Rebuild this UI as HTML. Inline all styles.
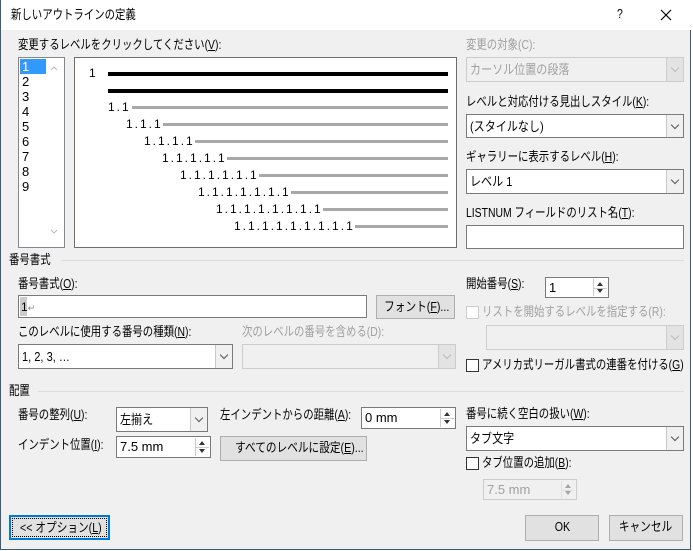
<!DOCTYPE html>
<html><head><meta charset="utf-8"><style>
*{box-sizing:border-box;margin:0;padding:0}
body{width:693px;height:551px;background:#fff;position:relative;overflow:hidden;font-family:"Liberation Sans","Noto Sans CJK JP",sans-serif;font-size:12px;color:#000}
#win{position:absolute;left:0;top:0;width:691px;height:550px;background:#f0f0f0;border:1px solid #3c5a7a;border-top:none}
#tb{position:absolute;left:0;top:0;width:690px;height:30px;background:#fff}
.a{position:absolute;white-space:nowrap;line-height:14px;transform:scaleX(.8);transform-origin:0 0}
.g{color:#a0a0a0}
.box{position:absolute;background:#fff;border:1px solid #7a7a7a}
.cb{position:absolute;background:#fff;border:1px solid #7a7a7a}
.cb .ar{position:absolute;right:0;top:0;bottom:0;width:17px;background:#f0f0f0;border-left:1px solid #c8c8c8}
.cb .ar:after{content:"";position:absolute;left:5px;top:7px;width:5px;height:5px;border-right:1px solid #555;border-bottom:1px solid #555;transform:rotate(45deg)}
.cb.dis{background:#f0f0f0;border-color:#cccccc}
.cb.dis .ar{background:#e3e3e3;border-left-color:#cccccc}
.cb.dis .ar:after{border-color:#bbb}
.cb .t{position:absolute;left:3px;top:5px;line-height:14px;white-space:nowrap;transform:scaleX(.85);transform-origin:0 0;font-size:13px}
.btn{position:absolute;background:#e1e1e1;border:1px solid #adadad;text-align:center;line-height:22px;white-space:nowrap}
.btn span{display:inline-block;transform:scaleX(.82)}
.spin{position:absolute;background:#fff;border:1px solid #7a7a7a}
.spin .s{position:absolute;right:1px;top:1px;bottom:1px;width:14px;border-left:1px solid #ccc}
.spin .s:before{content:"";position:absolute;left:3px;top:3px;border:3.5px solid transparent;border-bottom:4px solid #333;border-top:none}
.spin .s:after{content:"";position:absolute;left:3px;bottom:3px;border:3.5px solid transparent;border-top:4px solid #333;border-bottom:none}
.spin .s i{position:absolute;left:0;right:0;top:50%;border-top:1px solid #ccc}
.spin .t{position:absolute;left:3px;top:3px;font-size:13px;line-height:14px;white-space:nowrap}
.chk{position:absolute;width:13px;height:13px;border:1px solid #333;background:#fff}
.sep{position:absolute;height:1px;background:#dcdcdc}
.bl{position:absolute;height:4px;background:#000}
.gl{position:absolute;height:3px;background:#a8a8a8}
.n{position:absolute;font-size:12px;letter-spacing:2px;line-height:12px;white-space:nowrap}
u{text-decoration:underline}
</style></head><body>
<div id="win">
<div id="tb"></div>
<div class="a" style="left:10px;top:8px;font-size:13px">新しいアウトラインの定義</div>
<div class="a" style="left:616px;top:7px;font-size:13px">?</div>
<svg style="position:absolute;left:659px;top:9px" width="12" height="12"><path d="M1 1L11 11M11 1L1 11" stroke="#000" stroke-width="1.2"/></svg>

<div class="a" style="left:17px;top:38px;font-size:13px">変更するレベルをクリックしてください(<u>V</u>):</div>
<div class="box" style="left:17px;top:57px;width:47px;height:191px;border-color:#828790"></div>
<div style="position:absolute;left:19px;top:59px;width:26px;height:15px;background:#3399ff"></div>
<div style="position:absolute;left:21px;top:60px;color:#fff;font-size:13px;line-height:14px">1</div>
<div style="position:absolute;left:21px;top:74px;font-size:13px;line-height:15px">2<br>3<br>4<br>5<br>6<br>7<br>8<br>9</div>
<svg style="position:absolute;left:49px;top:65px" width="8" height="6"><path d="M1 5L4 2L7 5" fill="none" stroke="#bbb"/></svg>
<svg style="position:absolute;left:49px;top:229px" width="8" height="6"><path d="M1 1L4 4L7 1" fill="none" stroke="#bbb"/></svg>

<div class="box" style="left:73px;top:57px;width:383px;height:191px;border-color:#6d6d6d"></div>
<div class="n" style="left:88px;top:67px">1</div>
<div class="bl" style="left:107px;top:72px;width:340px"></div>
<div class="bl" style="left:107px;top:89px;width:340px"></div>
<div class="n" style="left:107px;top:101px">1.1</div><div class="gl" style="left:131px;top:106px;width:316px"></div>
<div class="n" style="left:125px;top:118px">1.1.1</div><div class="gl" style="left:162px;top:123px;width:285px"></div>
<div class="n" style="left:143px;top:135px">1.1.1.1</div><div class="gl" style="left:194px;top:140px;width:253px"></div>
<div class="n" style="left:161px;top:152px">1.1.1.1.1</div><div class="gl" style="left:226px;top:157px;width:221px"></div>
<div class="n" style="left:179px;top:169px">1.1.1.1.1.1</div><div class="gl" style="left:258px;top:174px;width:189px"></div>
<div class="n" style="left:197px;top:186px">1.1.1.1.1.1.1</div><div class="gl" style="left:290px;top:191px;width:157px"></div>
<div class="n" style="left:215px;top:203px">1.1.1.1.1.1.1.1</div><div class="gl" style="left:322px;top:208px;width:125px"></div>
<div class="n" style="left:233px;top:220px">1.1.1.1.1.1.1.1.1</div><div class="gl" style="left:354px;top:225px;width:93px"></div>

<div class="a g" style="left:465px;top:38px;font-size:13px">変更の対象(C):</div>
<div class="cb dis" style="left:465px;top:57px;width:218px;height:25px"><span class="t g">カーソル位置の段落</span><div class="ar"></div></div>
<div class="a" style="left:465px;top:95px;font-size:13px">レベルと対応付ける見出しスタイル(<u>K</u>):</div>
<div class="cb" style="left:465px;top:114px;width:218px;height:24px"><span class="t">(スタイルなし)</span><div class="ar"></div></div>
<div class="a" style="left:465px;top:150px;font-size:13px">ギャラリーに表示するレベル(<u>H</u>):</div>
<div class="cb" style="left:465px;top:169px;width:218px;height:25px"><span class="t">レベル 1</span><div class="ar"></div></div>
<div class="a" style="left:465px;top:206px;font-size:13px">LISTNUM フィールドのリスト名(<u>T</u>):</div>
<div class="box" style="left:465px;top:225px;width:218px;height:24px"></div>

<div class="a" style="left:8px;top:253px;font-size:13px">番号書式</div>
<div class="sep" style="left:60px;top:260px;width:623px"></div>
<div class="a" style="left:17px;top:277px;font-size:13px">番号書式(<u>O</u>):</div>
<div class="box" style="left:17px;top:295px;width:349px;height:23px"></div>
<div style="position:absolute;left:19px;top:297px;width:7px;height:19px;background:#ccc"></div>
<div style="position:absolute;left:20px;top:300px;font-size:12px;line-height:14px">1<span style="color:#888;font-size:9px">↵</span></div>
<div class="btn" style="left:375px;top:295px;width:79px;height:24px;font-size:13px"><span>フォント(<u>F</u>)...</span></div>
<div class="a" style="left:17px;top:325px;font-size:13px">このレベルに使用する番号の種類(<u>N</u>):</div>
<div class="cb" style="left:17px;top:344px;width:215px;height:25px"><span class="t">1, 2, 3, …</span><div class="ar"></div></div>
<div class="a g" style="left:241px;top:325px;font-size:13px">次のレベルの番号を含める(D):</div>
<div class="cb dis" style="left:241px;top:344px;width:214px;height:25px"><div class="ar"></div></div>

<div class="a" style="left:465px;top:277px;font-size:13px">開始番号(<u>S</u>):</div>
<div class="spin" style="left:544px;top:277px;width:64px;height:21px"><span class="t">1</span><div class="s"><i></i></div></div>
<div class="chk" style="left:465px;top:306px;border-color:#ccc"></div>
<div class="a g" style="left:481px;top:305px;font-size:13px">リストを開始するレベルを指定する(R):</div>
<div class="cb dis" style="left:485px;top:325px;width:198px;height:25px"><div class="ar"></div></div>
<div class="chk" style="left:465px;top:359px"></div>
<div class="a" style="left:481px;top:358px;font-size:13px">アメリカ式リーガル書式の連番を付ける(<u>G</u>)</div>

<div class="a" style="left:8px;top:384px;font-size:13px">配置</div>
<div class="sep" style="left:37px;top:391px;width:646px"></div>
<div class="a" style="left:17px;top:408px;font-size:13px">番号の整列(<u>U</u>):</div>
<div class="cb" style="left:115px;top:407px;width:92px;height:25px"><span class="t">左揃え</span><div class="ar"></div></div>
<div class="a" style="left:219px;top:408px;font-size:13px">左インデントからの距離(<u>A</u>):</div>
<div class="spin" style="left:360px;top:407px;width:95px;height:22px"><span class="t">0 mm</span><div class="s"><i></i></div></div>
<div class="a" style="left:17px;top:438px;font-size:13px">インデント位置(<u>I</u>):</div>
<div class="spin" style="left:115px;top:436px;width:95px;height:22px"><span class="t">7.5 mm</span><div class="s"><i></i></div></div>
<div class="btn" style="left:219px;top:436px;width:147px;height:25px;font-size:13px"><span>すべてのレベルに設定(<u>E</u>)...</span></div>

<div class="a" style="left:465px;top:407px;font-size:13px">番号に続く空白の扱い(<u>W</u>):</div>
<div class="cb" style="left:465px;top:426px;width:218px;height:25px"><span class="t">タブ文字</span><div class="ar"></div></div>
<div class="chk" style="left:465px;top:457px"></div>
<div class="a" style="left:481px;top:456px;font-size:13px">タブ位置の追加(<u>B</u>):</div>
<div class="spin" style="left:482px;top:479px;width:94px;height:21px;border-color:#ccc;background:#f0f0f0"><span class="t g">7.5 mm</span><div class="s" style="opacity:.4"><i></i></div></div>

<div class="btn" style="left:8px;top:515px;width:101px;height:25px;border:2px solid #0078d7;line-height:21px;font-size:13px"><div style="position:absolute;left:1px;top:1px;right:1px;bottom:1px;border:1px dotted #000"></div><span>&lt;&lt; オプション(<u>L</u>)</span></div>
<div class="btn" style="left:524px;top:515px;width:74px;height:26px;font-size:13px"><span>OK</span></div>
<div class="btn" style="left:608px;top:515px;width:74px;height:26px;font-size:13px"><span>キャンセル</span></div>
</div>
</body></html>
